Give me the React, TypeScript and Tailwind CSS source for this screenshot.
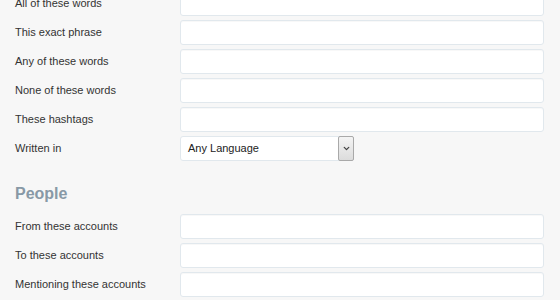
import { ChevronDown } from 'lucide-react'

const wordFields = ['All of these words', 'This exact phrase', 'Any of these words', 'None of these words', 'These hashtags']
const peopleFields = ['From these accounts', 'To these accounts', 'Mentioning these accounts']

function Row({ label, children }: { label: string; children: React.ReactNode }) {
  return (
    <div className="flex items-center h-[25px] mb-[4px]">
      <label className="w-[165px] shrink-0 text-[11px] text-[#333]">{label}</label>
      {children}
    </div>
  )
}

function TextField() {
  return (
    <input
      type="text"
      className="w-[364px] h-[25px] bg-white border border-[#e1e8ed] rounded-[3px] shadow-[inset_0_1px_1px_rgba(0,0,0,0.03)] outline-none px-2"
    />
  )
}

export default function App() {
  return (
    <div className="w-[560px] h-[300px] overflow-hidden bg-[#f7f7f7] font-['Liberation_Sans',Arial,sans-serif]">
      <div className="pl-[15px] -mt-[9px]">
        {wordFields.map(f => (
          <Row key={f} label={f}>
            <TextField />
          </Row>
        ))}
        <Row label="Written in">
          <div className="flex h-[25px] w-[174px] bg-white border border-[#e1e8ed] rounded-[3px]">
            <span className="flex-1 flex items-center pl-[7px] text-[11px] text-[#222]">Any Language</span>
            <span className="w-[16px] flex items-center justify-center bg-gradient-to-b from-[#f4f4f4] to-[#dcdcdc] border border-[#a9a9a9] rounded-[2px] -my-px -mr-px">
              <ChevronDown className="w-[9px] h-[9px] text-[#444]" strokeWidth={3.5} />
            </span>
          </div>
        </Row>
        <h2 className="text-[16px] font-bold text-[#8899a6] mt-[23px] mb-[10px] leading-[20px]">People</h2>
        {peopleFields.map(f => (
          <Row key={f} label={f}>
            <TextField />
          </Row>
        ))}
      </div>
    </div>
  )
}
